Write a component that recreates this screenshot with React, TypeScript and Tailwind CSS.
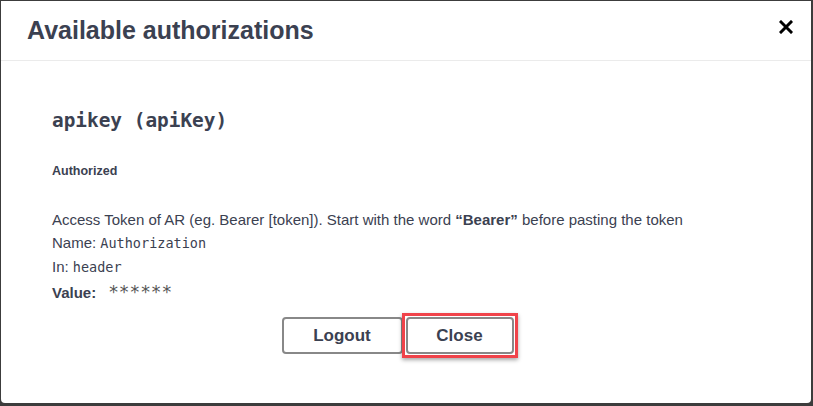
import React from "react";

export default function App() {
  const sans = { fontFamily: '"Liberation Sans", Arial, sans-serif' };
  const mono = { fontFamily: '"DejaVu Sans Mono", "Liberation Mono", monospace' };
  return (
    <div className="w-[813px] h-[406px] bg-[#3c3c3c] pt-[1px] pl-[1px] pr-[2px] pb-[3px]" style={sans}>
      <div className="w-full h-full bg-white rounded-b-[4px] flex flex-col text-[#3b4151]">
        <div className="h-[60px] border-b border-[#ebebeb] flex items-center justify-between pl-[26px] pr-[18px]">
          <h3 className="text-[25px] font-bold leading-none pb-[1px]">Available authorizations</h3>
          <svg width="14" height="14" viewBox="0 0 14 14" className="mb-[8px]">
            <path d="M2 2 L12 12 M12 2 L2 12" stroke="#000" strokeWidth="3" strokeLinecap="square" />
          </svg>
        </div>
        <div className="pl-[51px] pt-[47px] flex flex-col">
          <h4 className="text-[19.4px] font-bold leading-[26px]" style={mono}>apikey (apiKey)</h4>
          <h6 className="text-[12.5px] font-bold mt-[30px] leading-[14px]">Authorized</h6>
          <p className="text-[15px] mt-[33px] leading-[17px]">
            Access Token of AR (eg. Bearer [token]). Start with the word <b>“Bearer”</b> before pasting the token
          </p>
          <p className="text-[15px] mt-[6px] leading-[18px]">
            Name: <code className="text-[13.5px]" style={mono}>Authorization</code>
          </p>
          <p className="text-[15px] mt-[6px] leading-[18px]">
            In: <code className="text-[13.5px]" style={mono}>header</code>
          </p>
          <div className="mt-[7px] flex items-baseline gap-[12px] leading-[18px]">
            <span className="text-[15px] font-bold">Value:</span>
            <span className="text-[17.7px] text-[#555]" style={mono}>******</span>
          </div>
        </div>
        <div className="flex justify-center mt-[11px] pr-[13px]">
          <div className="flex items-center">
            <button className="w-[121px] h-[37px] border-2 border-[#888] rounded-[4px] text-[17px] font-bold bg-white text-[#3b4151]">
              Logout
            </button>
            <div className="border-[3px] border-[#f0434a] shadow-[0_2px_4px_rgba(0,0,0,0.35)] p-[1px] -ml-[1px]">
              <button className="block w-[108px] h-[37px] border-2 border-[#888] rounded-[4px] text-[17px] font-bold bg-white text-[#3b4151]">
                Close
              </button>
            </div>
          </div>
        </div>
      </div>
    </div>
  );
}
